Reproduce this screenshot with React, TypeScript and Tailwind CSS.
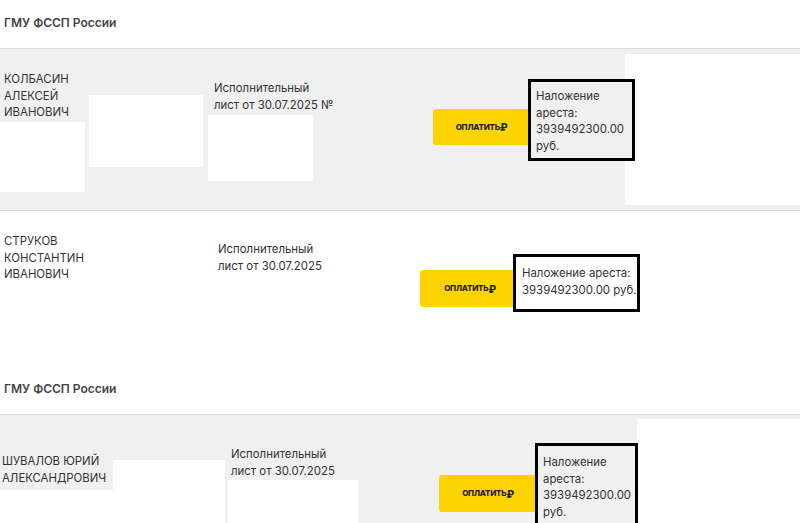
const font = { fontFamily: 'Inter, "Noto Sans", sans-serif' }

function PayButton({ className }: { className: string }) {
  return (
    <div
      className={`shrink-0 flex items-center justify-center rounded-[3px] bg-[#fdd400] text-[8px] font-extrabold tracking-[-0.2px] text-[#222] ${className}`}
    >
      ОПЛАТИТЬ<span className="text-[10px] leading-none">₽</span>
    </div>
  )
}

function ArrestBox({ className, lines }: { className: string; lines: string[] }) {
  return (
    <div className={`relative z-10 shrink-0 border-[3px] border-black text-[11.4px] leading-[16.5px] text-[#333] ${className}`}>
      {lines.map((l) => (
        <div key={l} className="whitespace-nowrap">{l}</div>
      ))}
    </div>
  )
}

function Header() {
  return (
    <div className="h-[49px] border-b border-[#dadada] bg-white pl-1 pt-[14px] text-[12px] font-semibold text-[#444]">
      ГМУ ФССП России
    </div>
  )
}

export default function App() {
  return (
    <div className="h-[523px] w-[800px] overflow-hidden bg-white" style={font}>
      <Header />

      {/* Колбасин */}
      <div className="flex h-[162px] items-start border-b border-[#dadada] bg-[#f0f0f0] text-[11.4px] leading-[16.5px] text-[#333]">
        <div className="w-[85px] shrink-0">
          <div className="h-[73px] pl-1 pt-[22px]">
            <div>КОЛБАСИН</div>
            <div>АЛЕКСЕЙ</div>
            <div>ИВАНОВИЧ</div>
          </div>
          <div className="h-[70px] bg-white" />
        </div>
        <div className="ml-[4px] mt-[46px] h-[72px] w-[114px] shrink-0 bg-white" />
        <div className="ml-[5px] w-[105px] shrink-0">
          <div className="mt-[31px] h-[35px] whitespace-nowrap pl-[6px]">
            <div>Исполнительный</div>
            <div>лист от 30.07.2025 №</div>
          </div>
          <div className="h-[66px] bg-white" />
        </div>
        <PayButton className="ml-[120px] mt-[60px] h-[36px] w-[97px]" />
        <ArrestBox
          className="-ml-[2px] mt-[30px] h-[82px] w-[107px] bg-[#f0f0f0] pl-[5px] pt-[6px]"
          lines={['Наложение', 'ареста:', '3939492300.00', 'руб.']}
        />
        <div className="-ml-[10px] mt-[5px] h-[151px] flex-1 bg-white" />
      </div>

      {/* Струков */}
      <div className="flex h-[155px] items-start bg-white text-[11.4px] leading-[16.5px] text-[#333]">
        <div className="w-[218px] shrink-0 pl-1 pt-[22px]">
          <div>СТРУКОВ</div>
          <div>КОНСТАНТИН</div>
          <div>ИВАНОВИЧ</div>
        </div>
        <div className="mt-[30px] w-[202px] shrink-0">
          <div>Исполнительный</div>
          <div>лист от 30.07.2025</div>
        </div>
        <PayButton className="mt-[59px] h-[37px] w-[100px]" />
        <ArrestBox
          className="-ml-[7px] mt-[43px] h-[58px] w-[127px] bg-white pl-[6px] pt-[8px]"
          lines={['Наложение ареста:', '3939492300.00 руб.']}
        />
      </div>

      <Header />

      {/* Шувалов */}
      <div className="flex h-[120px] items-start bg-[#f0f0f0] text-[11.4px] leading-[16.5px] text-[#333]">
        <div className="flex h-full w-[113px] shrink-0 flex-col">
          <div className="h-[75px] whitespace-nowrap pl-[2px] pt-[38px]">
            <div>ШУВАЛОВ ЮРИЙ</div>
            <div>АЛЕКСАНДРОВИЧ</div>
          </div>
          <div className="flex-1 bg-white" />
        </div>
        <div className="mt-[45px] h-[80px] w-[112px] shrink-0 bg-white" />
        <div className="ml-[3px] w-[130px] shrink-0">
          <div className="mt-[31px] h-[34px] pl-[3px]">
            <div>Исполнительный</div>
            <div>лист от 30.07.2025</div>
          </div>
          <div className="h-[60px] bg-white" />
        </div>
        <PayButton className="ml-[81px] mt-[60px] h-[37px] w-[98px]" />
        <ArrestBox
          className="-ml-[2px] mt-[28px] h-[100px] w-[103px] bg-[#f0f0f0] pl-[5px] pt-[8px]"
          lines={['Наложение', 'ареста:', '3939492300.00', 'руб.']}
        />
        <div className="-ml-[1px] mt-[4px] h-[116px] flex-1 bg-white" />
      </div>
    </div>
  )
}
